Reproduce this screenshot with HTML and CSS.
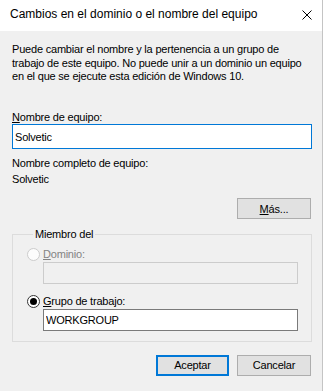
FILE: index.html
```html
<!DOCTYPE html>
<html lang="es">
<head>
  <meta charset="UTF-8" />
  <meta name="viewport" content="width=device-width, initial-scale=1" />
  <title>Cambios en el dominio o el nombre del equipo</title>
  <link rel="stylesheet" href="styles.css">
</head>
<body>
  <div class="window">
    <div class="titlebar">
      <span class="title">Cambios en el dominio o el nombre del equipo</span>
      <svg class="close" width="10" height="10" viewBox="0 0 10 10">
        <path d="M0.5 0.5 L9.5 9.5 M9.5 0.5 L0.5 9.5" stroke="#000" stroke-width="1" fill="none" />
      </svg>
    </div>

    <div class="content">
      <p class="intro">Puede cambiar el nombre y la pertenencia a un grupo de<br>trabajo de este equipo. No puede unir a un dominio un equipo en el que se ejecute esta edición de Windows 10.</p>

      <label class="label" for="computerName"><u>N</u>ombre de equipo:</label>
      <input class="textbox focused" id="computerName" type="text" value="Solvetic">

      <div class="label full-label">Nombre completo de equipo:</div>
      <div class="label full-value">Solvetic</div>

      <div class="row more-row">
        <button class="btn"><u>M</u>ás...</button>
      </div>

      <fieldset class="group">
        <legend>Miembro del</legend>

        <label class="option disabled">
          <input type="radio" name="member" disabled>
          <span><u>D</u>ominio:</span>
        </label>
        <input class="textbox sub disabled-box" type="text" disabled>

        <label class="option second">
          <input type="radio" name="member" checked>
          <span><u>G</u>rupo de trabajo:</span>
        </label>
        <input class="textbox sub" type="text" value="WORKGROUP">
      </fieldset>

      <div class="row actions">
        <button class="btn default">Aceptar</button>
        <button class="btn">Cancelar</button>
      </div>
    </div>
  </div>
</body>
</html>
```

FILE: styles.css
```css
html, body {
  margin: 0;
  padding: 0;
}

body {
  font-family: "Liberation Sans", Arial, sans-serif;
  font-size: 11px;
  letter-spacing: -0.2px;
  line-height: 13.5px;
  color: #000;
  background: #f0f0f0;
}

u {
  text-decoration: underline;
  text-underline-offset: 1px;
}

.window {
  width: 322px;
  height: 391px;
  border-right: 1px solid #c4c4c4;
  background: #f0f0f0;
}

.titlebar {
  height: 31px;
  background: #fff;
  display: flex;
  align-items: center;
  justify-content: space-between;
  padding: 0 10px 0 10px;
}

.title {
  font-size: 12px;
  letter-spacing: 0;
  margin-top: -1px;
}

.close {
  display: block;
  margin-top: -2px;
}

.content {
  padding: 0 10px 0 12px;
}

.intro {
  margin: 12px 0 0 0;
}

.label {
  display: block;
}

label.label {
  margin-top: 27px;
}

.textbox {
  display: block;
  box-sizing: border-box;
  font-family: inherit;
  font-size: 11px;
  letter-spacing: -0.2px;
  color: #000;
  background: #fff;
  border: 1px solid #7a7a7a;
  padding: 0 2px;
  margin: 0;
  outline: none;
}

.textbox.focused {
  width: 300px;
  height: 25px;
  border-color: #0078d7;
  margin-top: 0;
}

.full-label {
  margin-top: 8px;
}

.full-value {
  margin-top: 2px;
}

.row {
  display: flex;
  justify-content: flex-end;
  gap: 8px;
  padding-right: 1px;
}

.more-row {
  margin-top: 12px;
}

.btn {
  box-sizing: border-box;
  width: 74px;
  height: 21px;
  padding: 0;
  font-family: inherit;
  font-size: 11px;
  letter-spacing: -0.2px;
  color: #000;
  background: #e1e1e1;
  border: 1px solid #adadad;
  border-radius: 0;
}

.btn.default {
  width: 73px;
  border: 2px solid #0078d7;
}

.group {
  margin: 9px 0 0 0;
  width: 300px;
  box-sizing: border-box;
  border: 1px solid #dcdcdc;
  padding: 6px 0 10px 14px;
}

.group legend {
  padding: 0 2px;
  margin-left: 6px;
}

.option {
  display: flex;
  align-items: center;
  height: 14px;
}

.option span {
  margin-left: 3px;
}

.option.disabled span {
  color: #838383;
}

.option input {
  appearance: none;
  -webkit-appearance: none;
  box-sizing: border-box;
  width: 13px;
  height: 13px;
  margin: 0;
  border: 1px solid #333;
  border-radius: 50%;
  background: #fff;
  position: relative;
}

.option input:disabled {
  border-color: #cccccc;
  background: #fcfcfc;
}

.option input:checked::after {
  content: "";
  position: absolute;
  left: 2px;
  top: 2px;
  width: 7px;
  height: 7px;
  border-radius: 50%;
  background: #000;
}

.option.second {
  margin-top: 11px;
}

.textbox.sub {
  width: 255px;
  height: 22px;
  margin-left: 16px;
  margin-top: 0;
}

.textbox.disabled-box {
  background: #f0f0f0;
  border-color: #cccccc;
}

.actions {
  margin-top: 13px;
}
```
